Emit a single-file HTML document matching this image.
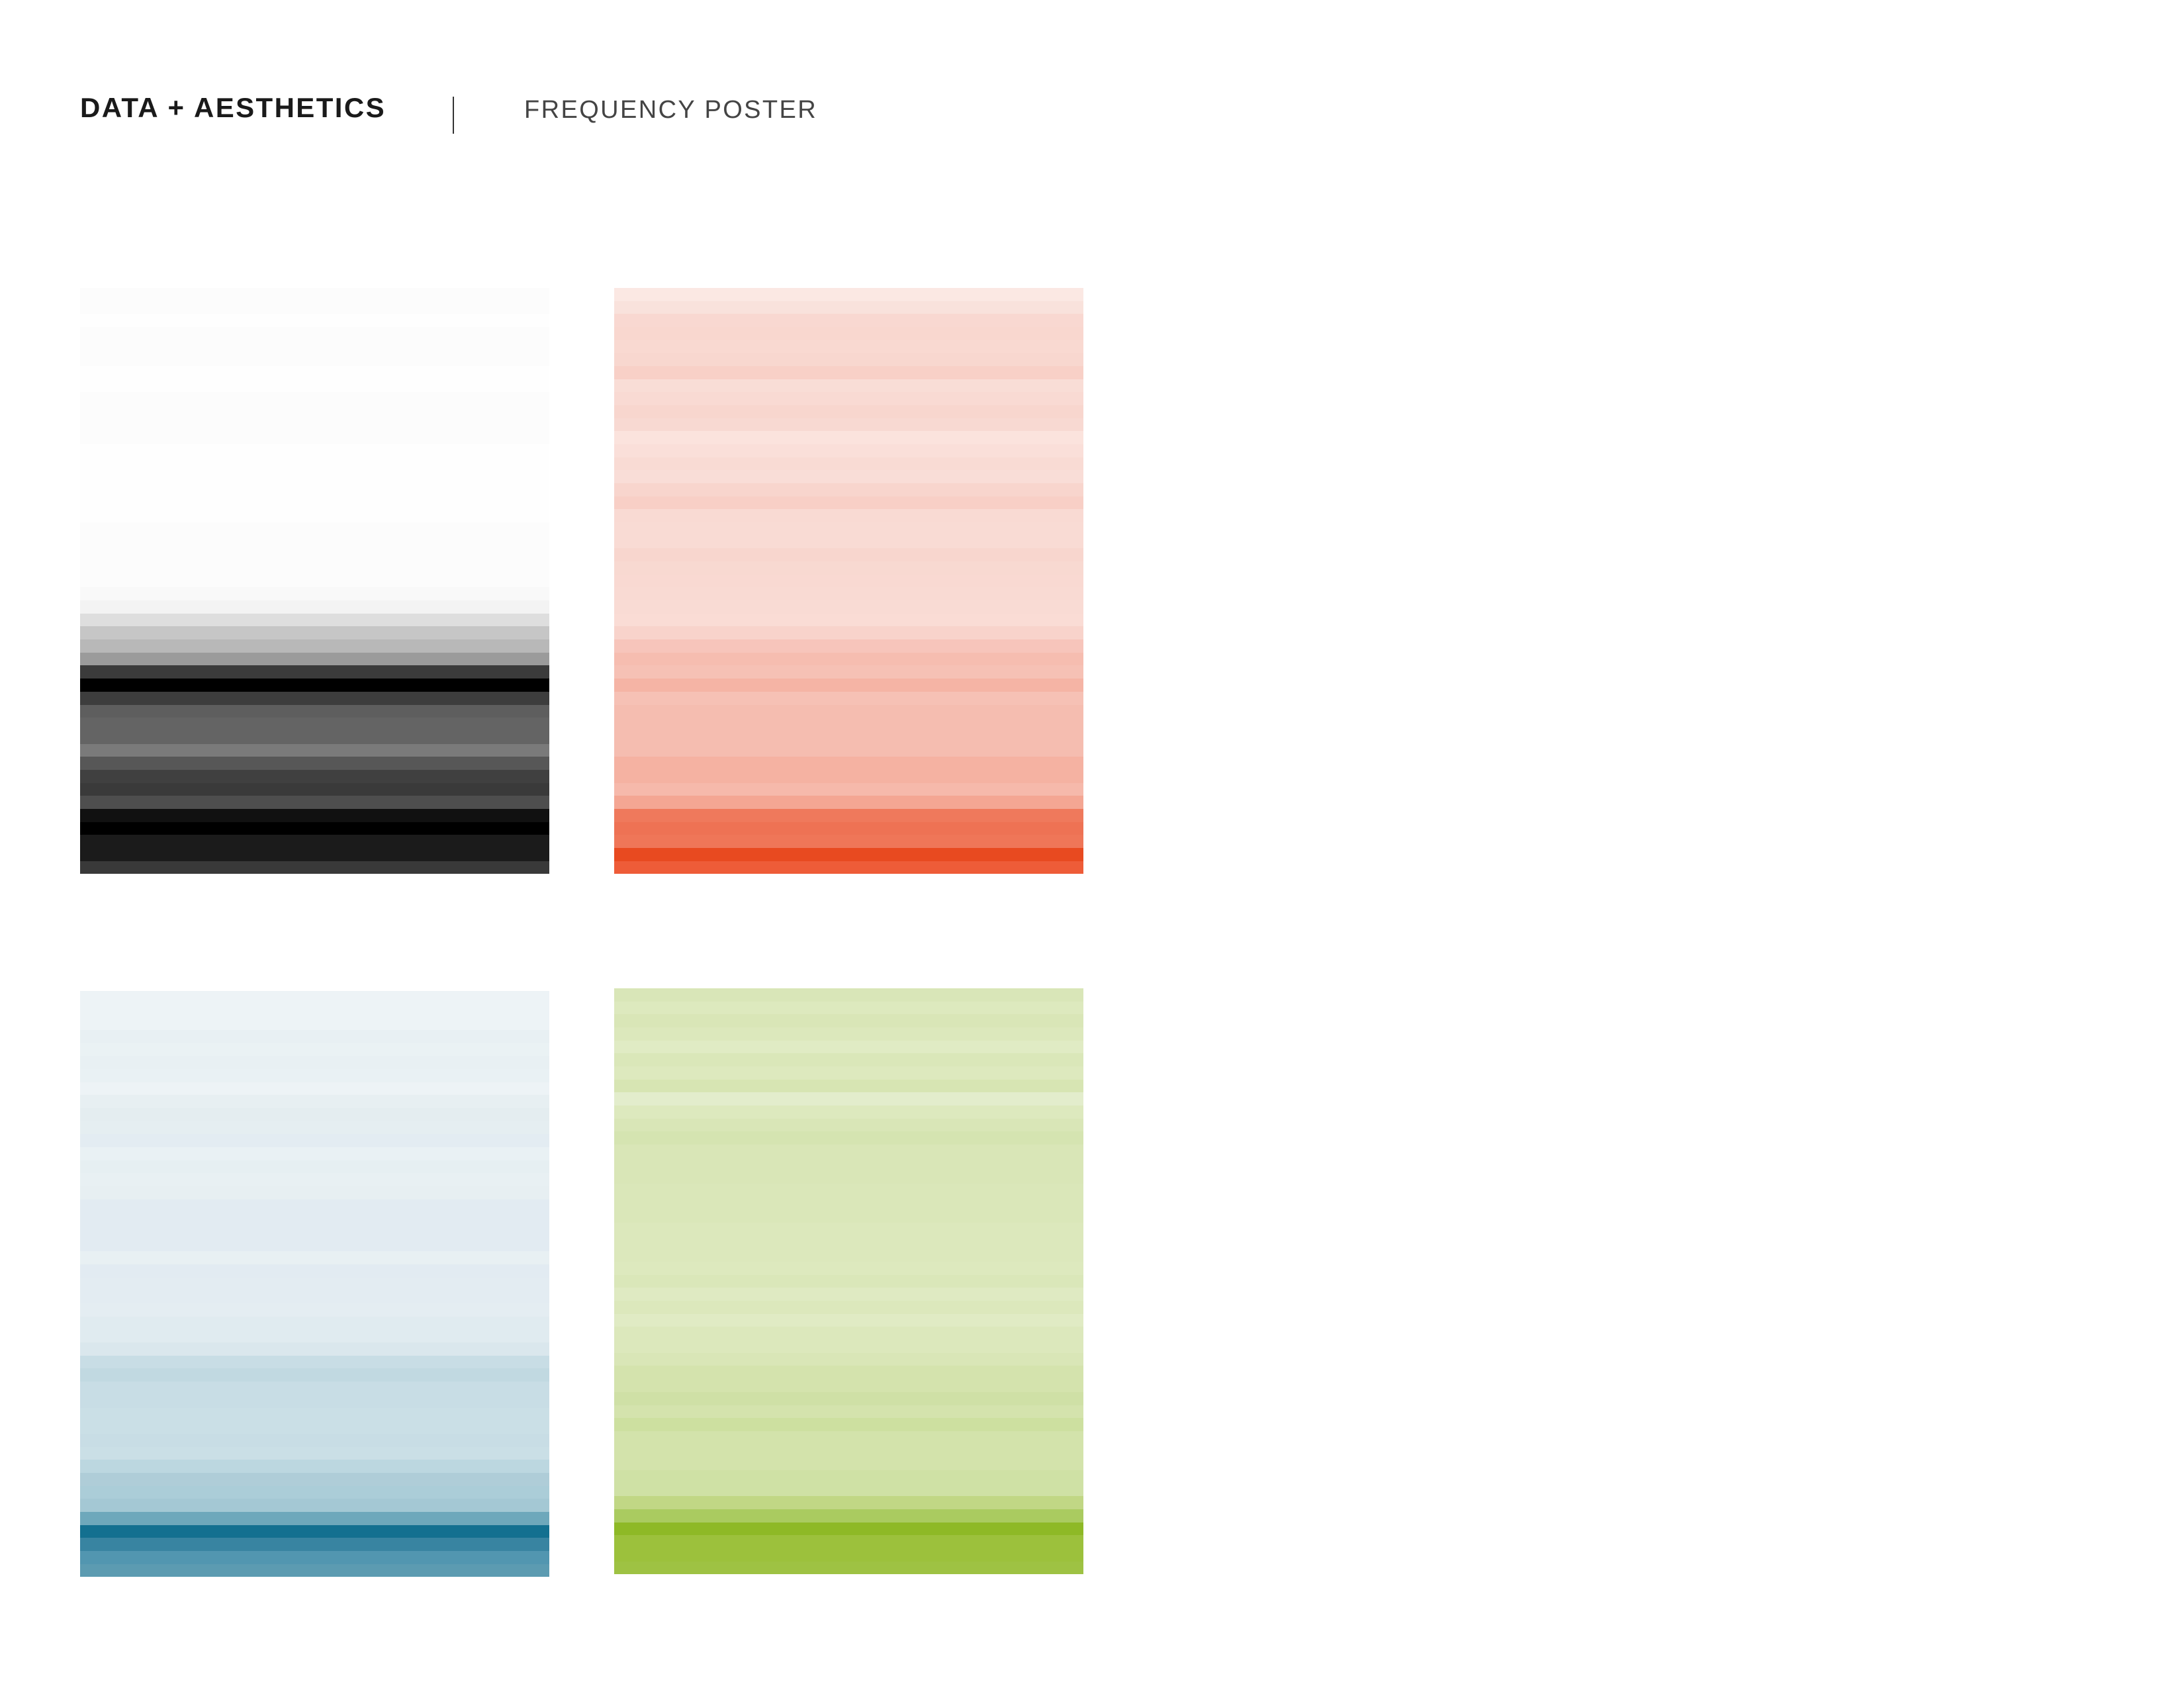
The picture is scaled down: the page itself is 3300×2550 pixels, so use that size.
<!DOCTYPE html>
<html><head><meta charset="utf-8"><style>
html,body{margin:0;padding:0;background:#fff;width:3300px;height:2550px;overflow:hidden;position:relative;font-family:"Liberation Sans",sans-serif}
.h1{position:absolute;left:121px;top:138px;font-size:42px;font-weight:bold;letter-spacing:2.4px;color:#1a1a1a;line-height:50px;white-space:nowrap}
.sep{position:absolute;left:684px;top:146px;width:2px;height:56px;background:#333}
.h2{position:absolute;left:792px;top:141px;font-size:38px;letter-spacing:2.4px;color:#444;line-height:50px;white-space:nowrap}
.p{position:absolute;width:709px;height:885px;display:flex;flex-direction:column}
.p div{flex:1}
</style></head><body>
<div class="h1">DATA + AESTHETICS</div>
<div class="sep"></div>
<div class="h2">FREQUENCY POSTER</div>

<div class="p" style="left:121px;top:435px">
<div style="background:#fcfcfc"></div><div style="background:#fcfcfc"></div><div style="background:#fefefe"></div><div style="background:#fcfcfc"></div><div style="background:#fcfcfc"></div><div style="background:#fcfcfc"></div><div style="background:#fefefe"></div><div style="background:#fefefe"></div><div style="background:#fcfcfc"></div><div style="background:#fcfcfc"></div><div style="background:#fcfcfc"></div><div style="background:#fcfcfc"></div><div style="background:#fefefe"></div><div style="background:#fefefe"></div><div style="background:#fefefe"></div><div style="background:#fefefe"></div><div style="background:#fefefe"></div><div style="background:#fefefe"></div><div style="background:#fcfcfc"></div><div style="background:#fcfcfc"></div><div style="background:#fcfcfc"></div><div style="background:#fcfcfc"></div><div style="background:#fcfcfc"></div><div style="background:#f9f9f9"></div><div style="background:#f3f3f3"></div><div style="background:#dedede"></div><div style="background:#c6c6c6"></div><div style="background:#b8b8b8"></div><div style="background:#9b9b9b"></div><div style="background:#3b3b3b"></div><div style="background:#000"></div><div style="background:#3d3d3d"></div><div style="background:#5e5e5e"></div><div style="background:#646464"></div><div style="background:#646464"></div><div style="background:#7a7a7a"></div><div style="background:#575757"></div><div style="background:#404040"></div><div style="background:#3a3a3a"></div><div style="background:#4e4e4e"></div><div style="background:#111"></div><div style="background:#000"></div><div style="background:#1b1b1b"></div><div style="background:#1b1b1b"></div><div style="background:#393939"></div>
</div>

<div class="p" style="left:928px;top:435px">
<div style="background:#fbe8e3"></div><div style="background:#f9e2dc"></div><div style="background:#f9d8d1"></div><div style="background:#f9d7cf"></div><div style="background:#f9d9d1"></div><div style="background:#f8d7cf"></div><div style="background:#f8d0c7"></div><div style="background:#f9ddd6"></div><div style="background:#f9dad3"></div><div style="background:#f8d6ce"></div><div style="background:#f8d9d2"></div><div style="background:#fbe3dd"></div><div style="background:#fadfd9"></div><div style="background:#f9dbd4"></div><div style="background:#f9ddd7"></div><div style="background:#f8d5cd"></div><div style="background:#f8cfc6"></div><div style="background:#f9dad3"></div><div style="background:#f9dbd4"></div><div style="background:#f9dbd4"></div><div style="background:#f8d6ce"></div><div style="background:#f8d9d1"></div><div style="background:#f9d9d2"></div><div style="background:#f9dad3"></div><div style="background:#f9dbd4"></div><div style="background:#fadcd5"></div><div style="background:#f8d3cb"></div><div style="background:#f7c5bb"></div><div style="background:#f6bdb0"></div><div style="background:#f6c1b5"></div><div style="background:#f5b4a5"></div><div style="background:#f6c1b5"></div><div style="background:#f5bdb0"></div><div style="background:#f5bdb0"></div><div style="background:#f5bdb0"></div><div style="background:#f5bdb0"></div><div style="background:#f5b2a2"></div><div style="background:#f5b2a2"></div><div style="background:#f6b9ab"></div><div style="background:#f4a693"></div><div style="background:#ef795c"></div><div style="background:#ee7254"></div><div style="background:#ef7658"></div><div style="background:#e84a20"></div><div style="background:#ee5c38"></div>
</div>

<div class="p" style="left:121px;top:1497px">
<div style="background:#edf3f6"></div><div style="background:#edf3f6"></div><div style="background:#edf3f6"></div><div style="background:#e8f0f3"></div><div style="background:#eaf2f4"></div><div style="background:#e8f0f3"></div><div style="background:#e9f1f4"></div><div style="background:#edf3f6"></div><div style="background:#e7eff2"></div><div style="background:#e4edf0"></div><div style="background:#e5eef1"></div><div style="background:#e3ecf2"></div><div style="background:#e9f1f4"></div><div style="background:#e6eff2"></div><div style="background:#e8f0f3"></div><div style="background:#e7eff2"></div><div style="background:#e2ebf2"></div><div style="background:#e2ebf2"></div><div style="background:#e2ebf2"></div><div style="background:#e2ebf2"></div><div style="background:#e8f0f3"></div><div style="background:#e2ebf2"></div><div style="background:#e3ecf2"></div><div style="background:#e3ecf2"></div><div style="background:#e4edf2"></div><div style="background:#e0ebf0"></div><div style="background:#e0ebf0"></div><div style="background:#dae7ed"></div><div style="background:#c8dde5"></div><div style="background:#c1d9e1"></div><div style="background:#c8dde5"></div><div style="background:#c8dde5"></div><div style="background:#cadfe6"></div><div style="background:#cadfe6"></div><div style="background:#c8dde5"></div><div style="background:#cadfe6"></div><div style="background:#bcd7e0"></div><div style="background:#afcdd8"></div><div style="background:#abcdd8"></div><div style="background:#a4c8d4"></div><div style="background:#6ea8bb"></div><div style="background:#137090"></div><div style="background:#3884a1"></div><div style="background:#5296b0"></div><div style="background:#5c9bb1"></div>
</div>

<div class="p" style="left:928px;top:1493px">
<div style="background:#d9e6b8"></div><div style="background:#dde9be"></div><div style="background:#d9e6b7"></div><div style="background:#dce8bc"></div><div style="background:#e0ebc4"></div><div style="background:#dae7b9"></div><div style="background:#dde9be"></div><div style="background:#d7e5b3"></div><div style="background:#e3edcc"></div><div style="background:#dde9be"></div><div style="background:#d9e6b7"></div><div style="background:#d5e4b1"></div><div style="background:#d9e6b7"></div><div style="background:#d9e6b7"></div><div style="background:#d9e6b7"></div><div style="background:#dae7b9"></div><div style="background:#dae7b9"></div><div style="background:#dae7b9"></div><div style="background:#dce8bc"></div><div style="background:#dce8bc"></div><div style="background:#dce8bc"></div><div style="background:#dde9be"></div><div style="background:#dae7b9"></div><div style="background:#dfeac2"></div><div style="background:#dce8bc"></div><div style="background:#e0ebc4"></div><div style="background:#dce8bc"></div><div style="background:#dce8bc"></div><div style="background:#d9e6b7"></div><div style="background:#d4e3ad"></div><div style="background:#d4e3ad"></div><div style="background:#cfe0a6"></div><div style="background:#d4e3ad"></div><div style="background:#cde0a0"></div><div style="background:#d3e3ab"></div><div style="background:#d3e3ab"></div><div style="background:#d3e3ab"></div><div style="background:#cfe1a5"></div><div style="background:#cfe1a5"></div><div style="background:#c1d785"></div><div style="background:#aacb60"></div><div style="background:#8eb926"></div><div style="background:#9cc13c"></div><div style="background:#9cc13c"></div><div style="background:#9ec243"></div>
</div>
</body></html>
